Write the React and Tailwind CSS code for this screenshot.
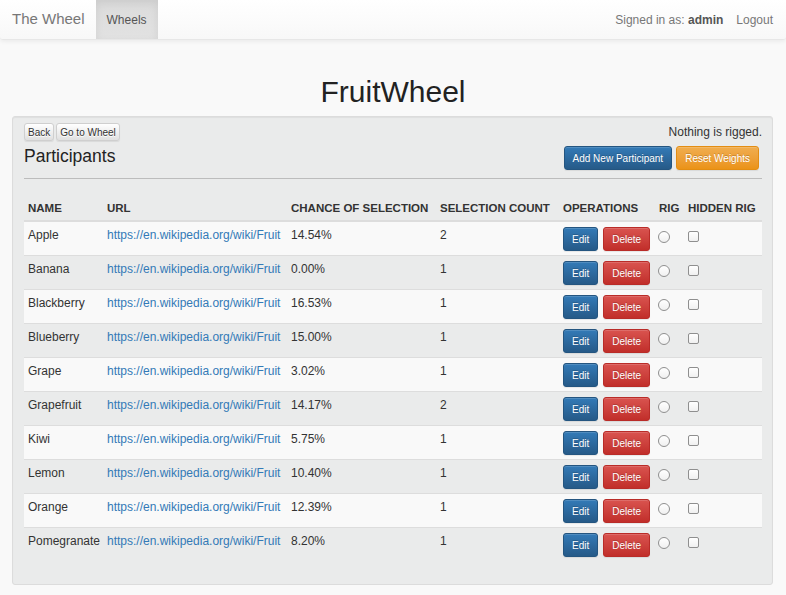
const fruits = [
  { name: 'Apple', chance: '14.54%', count: 2 },
  { name: 'Banana', chance: '0.00%', count: 1 },
  { name: 'Blackberry', chance: '16.53%', count: 1 },
  { name: 'Blueberry', chance: '15.00%', count: 1 },
  { name: 'Grape', chance: '3.02%', count: 1 },
  { name: 'Grapefruit', chance: '14.17%', count: 2 },
  { name: 'Kiwi', chance: '5.75%', count: 1 },
  { name: 'Lemon', chance: '10.40%', count: 1 },
  { name: 'Orange', chance: '12.39%', count: 1 },
  { name: 'Pomegranate', chance: '8.20%', count: 1 },
];

const btnShadow =
  'shadow-[inset_0_1px_0_rgba(255,255,255,0.15),0_1px_1px_rgba(0,0,0,0.075)] [text-shadow:0_-1px_0_rgba(0,0,0,0.2)]';

const BlueBtn = ({ children, className = '' }) => (
  <button
    className={`h-[24px] flex items-center rounded-[3px] border border-[#245580] bg-linear-to-b from-[#337ab7] to-[#265a88] text-white text-[10px] ${btnShadow} ${className}`}
  >
    {children}
  </button>
);

const RedBtn = ({ children }) => (
  <button
    className={`h-[24px] px-[8px] flex items-center rounded-[3px] border border-[#b92c28] bg-linear-to-b from-[#d9534f] to-[#c12e2a] text-white text-[10px] ${btnShadow}`}
  >
    {children}
  </button>
);

const XsBtn = ({ children }) => (
  <button className="h-[18px] px-[3px] flex items-center rounded-[3px] border border-[#cfcfcf] bg-linear-to-b from-white to-[#e0e0e0] text-[#333] text-[10px] [text-shadow:0_1px_0_#fff] shadow-[inset_0_1px_0_rgba(255,255,255,0.15),0_1px_1px_rgba(0,0,0,0.075)]">
    {children}
  </button>
);

export default function App() {
  return (
    <div className="min-h-screen bg-[#f9f9f9] text-[#333] font-['Liberation_Sans',Arial,sans-serif]">
      {/* navbar */}
      <nav className="h-[40px] flex items-stretch justify-between bg-linear-to-b from-white to-[#f8f8f8] border-b border-[#e7e7e7] rounded-b-[3px] shadow-[inset_0_1px_0_rgba(255,255,255,0.15),0_1px_5px_rgba(0,0,0,0.075)]">
        <div className="flex items-stretch">
          <a className="pl-[12px] pr-[11px] flex items-center text-[15px] text-[#777]">The Wheel</a>
          <a className="w-[62px] flex items-center justify-center text-[12px] text-[#555] bg-linear-to-b from-[#dbdbdb] to-[#e2e2e2] shadow-[inset_0_3px_9px_rgba(0,0,0,0.075)]">
            Wheels
          </a>
        </div>
        <div className="flex items-center gap-[13px] mr-[13px] text-[12px] text-[#777]">
          <span>
            Signed in as: <b className="text-[#555]">admin</b>
          </span>
          <a>Logout</a>
        </div>
      </nav>

      <h1 className="mt-[35px] mb-[8px] text-center text-[30px] leading-[33px] text-[#222]">FruitWheel</h1>

      <div className="mx-[12px] mr-[13px] pl-[11px] pr-[10px] pt-[6px] pb-[23px] bg-[#eaebeb] border border-[#dcdcdc] rounded-[3px] shadow-[inset_0_1px_1px_rgba(0,0,0,0.05),0_1px_0_rgba(255,255,255,0.1)]">
        <div className="flex items-center justify-between">
          <div className="flex gap-[2px]">
            <XsBtn>Back</XsBtn>
            <XsBtn>Go to Wheel</XsBtn>
          </div>
          <span className="text-[12px]">Nothing is rigged.</span>
        </div>

        <div className="mt-[5px] flex items-start justify-between">
          <h2 className="text-[17.5px] leading-[20px] text-[#222]">Participants</h2>
          <div className="flex gap-[4px] mr-[3px]">
            <BlueBtn className="px-[8px]">Add New Participant</BlueBtn>
            <button
              className={`h-[24px] px-[8px] flex items-center rounded-[3px] border border-[#e38d13] bg-linear-to-b from-[#f0ad4e] to-[#eb9316] text-white text-[10px] ${btnShadow}`}
            >
              Reset Weights
            </button>
          </div>
        </div>

        <div className="mt-[8px] border-t border-[#bcbcbc]" />

        <table className="mt-[12px] w-full table-fixed text-[12px]">
          <colgroup>
            <col className="w-[79px]" />
            <col className="w-[184px]" />
            <col className="w-[149px]" />
            <col className="w-[123px]" />
            <col className="w-[96px]" />
            <col className="w-[29px]" />
            <col className="w-[78px]" />
          </colgroup>
          <thead>
            <tr className="border-b-2 border-[#dddddd]">
              {['Name', 'URL', 'Chance of Selection', 'Selection Count', 'Operations', 'Rig', 'Hidden Rig'].map((h) => (
                <th
                  key={h}
                  className="pl-[4px] pt-[9px] pb-[3px] text-left text-[11.5px] leading-[17px] font-bold uppercase whitespace-nowrap text-[#333]"
                >
                  {h}
                </th>
              ))}
            </tr>
          </thead>
          <tbody>
            {fruits.map((f, i) => (
              <tr key={f.name} className={`border-t border-[#dddddd] ${i % 2 === 0 ? 'bg-[#f9f9f9]' : ''}`}>
                <td className="pl-[4px] pt-[5px] pb-[4px] align-top leading-[17px] whitespace-nowrap">{f.name}</td>
                <td className="pl-[4px] pt-[5px] pb-[4px] align-top leading-[17px] whitespace-nowrap">
                  <a className="text-[#337ab7]">https://en.wikipedia.org/wiki/Fruit</a>
                </td>
                <td className="pl-[4px] pt-[5px] pb-[4px] align-top leading-[17px]">{f.chance}</td>
                <td className="pl-[4px] pt-[5px] pb-[4px] align-top leading-[17px]">{f.count}</td>
                <td className="pl-[4px] pt-[5px] pb-[4px] align-top">
                  <div className="flex gap-[5px]">
                    <BlueBtn className="px-[8px]">Edit</BlueBtn>
                    <RedBtn>Delete</RedBtn>
                  </div>
                </td>
                <td className="pl-[3px] pt-[5px] pb-[4px] align-top">
                  <span className="mt-[4px] block w-[12px] h-[12px] rounded-full border border-[#8f8f8f] bg-linear-to-b from-white to-[#f0f0f0]" />
                </td>
                <td className="pl-[4px] pt-[5px] pb-[4px] align-top">
                  <span className="mt-[4px] block w-[11px] h-[11px] rounded-[2px] border border-[#8f8f8f] bg-linear-to-b from-white to-[#f0f0f0]" />
                </td>
              </tr>
            ))}
          </tbody>
        </table>
      </div>
    </div>
  );
}
